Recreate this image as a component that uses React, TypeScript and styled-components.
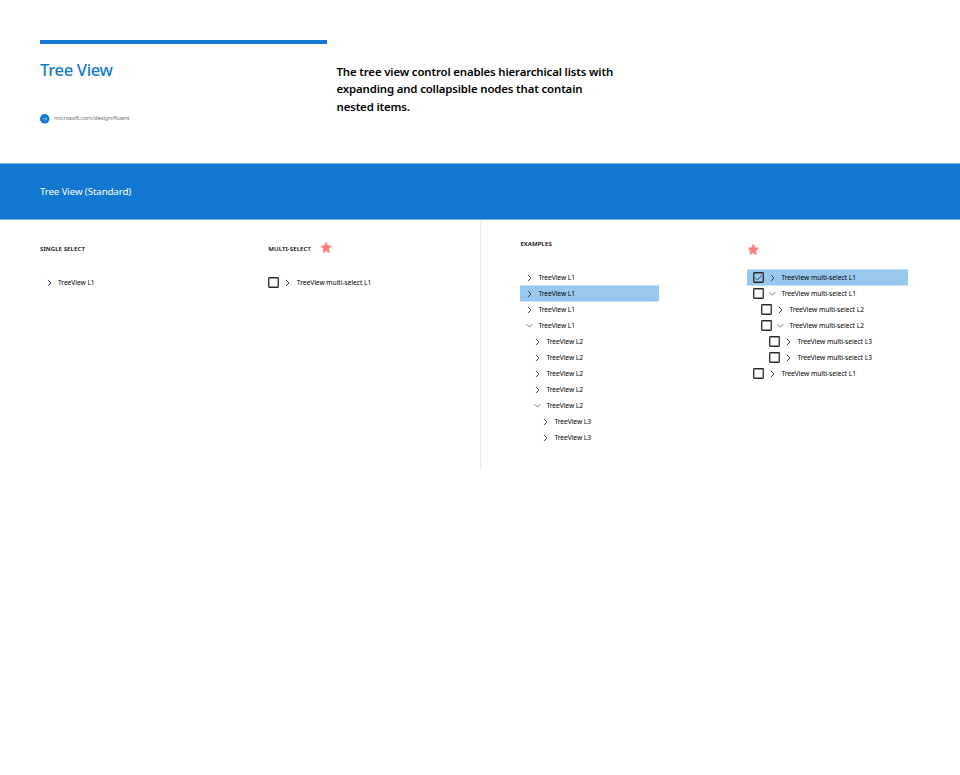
import React from "react";
import styled, { createGlobalStyle } from "styled-components";

const GlobalStyle = createGlobalStyle`
  * { box-sizing: border-box; }
  body { margin: 0; background: #fff; color: #000; font-family: "Noto Sans", "Open Sans", sans-serif; }
  h1, h2, h3, p { margin: 0; }
`;

const Page = styled.main`
  width: 960px;
  height: 775px;
  overflow: hidden;
  background: #fff;
`;

const Header = styled.header`
  display: grid;
  grid-template-columns: 287px 300px;
  column-gap: 9.5px;
  height: 163px;
  padding: 40px 0 0 40px;
`;

const Intro = styled.div`
  border-top: 4px solid #1279d2;
`;

const Title = styled.h1`
  margin-top: 14px;
  font-size: 16.6px;
  line-height: 24px;
  font-weight: 500;
  letter-spacing: -0.35px;
  color: #1279d2;
  white-space: nowrap;
`;

const SiteLink = styled.div`
  display: flex;
  align-items: center;
  gap: 4px;
  height: 10px;
  margin-top: 31.5px;
  font-size: 6px;
  line-height: 10px;
  letter-spacing: -0.19px;
  color: #767676;
`;

const LinkText = styled.span`
  padding-bottom: 1px;
`;

const Summary = styled.p`
  padding-top: 22.8px;
  font-size: 11.4px;
  line-height: 17.5px;
  font-weight: 600;
  letter-spacing: -0.14px;
  white-space: nowrap;
`;

const Band = styled.section`
  height: 57px;
  padding: 16.6px 40px 0;
  border-top: 1px solid #7db5e6;
  border-bottom: 1px solid #7db5e6;
  background: #1279d2;
  color: #fff;
`;

const BandTitle = styled.h2`
  font-size: 9.7px;
  line-height: 22px;
  font-weight: 400;
  letter-spacing: -0.1px;
  white-space: nowrap;
`;

const Panels = styled.div`
  display: grid;
  grid-template-columns: 480px 480px;
  height: 249px;
`;

const Panel = styled.section<{ $divided?: boolean }>`
  display: grid;
  grid-template-columns: ${(p) => (p.$divided ? "227px 161px" : "228.3px 180px")};
  align-content: start;
  padding-left: ${(p) => (p.$divided ? 39.4 : 40)}px;
  border-left: ${(p) => (p.$divided ? "1px solid #eaeaea" : "none")};
`;

const Column = styled.div<{ $head: number; $gap: number }>`
  display: grid;
  grid-template-rows: ${(p) => p.$head}px auto;
  row-gap: ${(p) => p.$gap}px;
  align-content: start;
`;

const Heading = styled.h3`
  display: flex;
  align-items: flex-end;
  gap: 8.5px;
  font-size: 6.1px;
  line-height: 10px;
  font-weight: 600;
  letter-spacing: 0.07px;
  white-space: nowrap;
`;

const Tree = styled.div<{ $width: number; $inset: number }>`
  width: ${(p) => p.$width}px;
  --inset: ${(p) => p.$inset}px;
`;

const Row = styled.div<{ $level: number; $selected?: boolean }>`
  display: flex;
  align-items: center;
  height: 16px;
  padding-left: calc(var(--inset) + ${(p) => (p.$level - 1) * 8}px);
  background: ${(p) => (p.$selected ? "linear-gradient(to top, #c6e0f6 1px, #99c8ef 1px)" : "transparent")};
  box-shadow: ${(p) => (p.$selected ? "0 -1px 0 #c6e0f6" : "none")};
`;

const Label = styled.span<{ $multi?: boolean }>`
  margin-left: 4.5px;
  font-size: 6.7px;
  line-height: 16px;
  letter-spacing: ${(p) => (p.$multi ? -0.04 : -0.06)}px;
  white-space: nowrap;
`;

const Icon = styled.svg`
  display: block;
  flex: none;
  overflow: visible;
`;

const BoxIcon = styled(Icon)`
  margin-right: 5px;
`;

const Star = () => (
  <Icon width="12" height="12" viewBox="0 0 12 12">
    <path
      d="M6.2.4 7.7 3.8 11.4 4.2 8.6 6.7 9.4 10.5 6.2 8.6 3 10.5 3.8 6.7 1 4.2 4.7 3.8Z"
      fill="#fe7e7e"
      stroke="#fe7e7e"
      strokeWidth="0.9"
      strokeLinejoin="round"
    />
  </Icon>
);

const Chevron = ({ open }: { open?: boolean }) => (
  <Icon width="8" height="8" viewBox="0 0 8 8" fill="none" stroke={open ? "#444" : "#222"} strokeWidth={open ? 0.7 : 0.8}>
    <path d={open ? "M.5 2.2 3.4 5.1 6.3 2.2" : "M1.9 .9 5 4 1.9 7.1"} />
  </Icon>
);

const Checkbox = ({ checked }: { checked?: boolean }) => (
  <BoxIcon width="11" height="11" viewBox="0 0 11 11" fill="none" stroke="#2b2b2b">
    <rect x=".75" y=".75" width="9.5" height="9.5" rx=".4" strokeWidth="1.3" />
    {checked && <path d="M2.2 5.8 4.3 7.9 9 3.2" strokeWidth="0.8" />}
  </BoxIcon>
);

type Node = { level: number; open?: boolean; selected?: boolean };

type TreeProps = { nodes: Node[]; multi?: boolean; width: number; inset?: number };

const TreeView = ({ nodes, multi, width, inset = 5.5 }: TreeProps) => (
  <Tree $width={width} $inset={inset}>
    {nodes.map((n, i) => (
      <Row key={i} $level={n.level} $selected={n.selected}>
        {multi && <Checkbox checked={n.selected} />}
        <Chevron open={n.open} />
        <Label $multi={multi}>{`TreeView ${multi ? "multi-select " : ""}L${n.level}`}</Label>
      </Row>
    ))}
  </Tree>
);

const singleNodes: Node[] = [
  { level: 1 },
  { level: 1, selected: true },
  { level: 1 },
  { level: 1, open: true },
  { level: 2 },
  { level: 2 },
  { level: 2 },
  { level: 2 },
  { level: 2, open: true },
  { level: 3 },
  { level: 3 },
];

const multiNodes: Node[] = [
  { level: 1, selected: true },
  { level: 1, open: true },
  { level: 2 },
  { level: 2, open: true },
  { level: 3 },
  { level: 3 },
  { level: 1 },
];

export default function App() {
  return (
    <Page>
      <GlobalStyle />
      <Header>
        <Intro>
          <Title>Tree View</Title>
          <SiteLink>
            <Icon width="10" height="10" viewBox="0 0 10 10">
              <circle cx="4.75" cy="4.8" r="4.75" fill="#1279d2" />
              <path d="M2.5 4.8h4.3M5 3 6.8 4.8 5 6.6" fill="none" stroke="#b9d9f4" strokeWidth=".6" />
            </Icon>
            <LinkText>microsoft.com/design/fluent</LinkText>
          </SiteLink>
        </Intro>
        <Summary>
          The tree view control enables hierarchical lists with
          <br />
          expanding and collapsible nodes that contain
          <br />
          nested items.
        </Summary>
      </Header>
      <Band>
        <BandTitle>Tree View (Standard)</BandTitle>
      </Band>
      <Panels>
        <Panel>
          <Column $head={34} $gap={20.5}>
            <Heading>SINGLE SELECT</Heading>
            <TreeView nodes={[{ level: 1 }]} width={138} />
          </Column>
          <Column $head={34} $gap={20.5}>
            <Heading>
              MULTI-SELECT <Star />
            </Heading>
            <TreeView nodes={[{ level: 1 }]} multi width={160} inset={-0.3} />
          </Column>
        </Panel>
        <Panel $divided>
          <Column $head={29} $gap={20.5}>
            <Heading>EXAMPLES</Heading>
            <TreeView nodes={singleNodes} width={138.5} />
          </Column>
          <Column $head={36} $gap={13.5}>
            <Heading>
              <Star />
            </Heading>
            <TreeView nodes={multiNodes} multi width={160.4} />
          </Column>
        </Panel>
      </Panels>
    </Page>
  );
}
